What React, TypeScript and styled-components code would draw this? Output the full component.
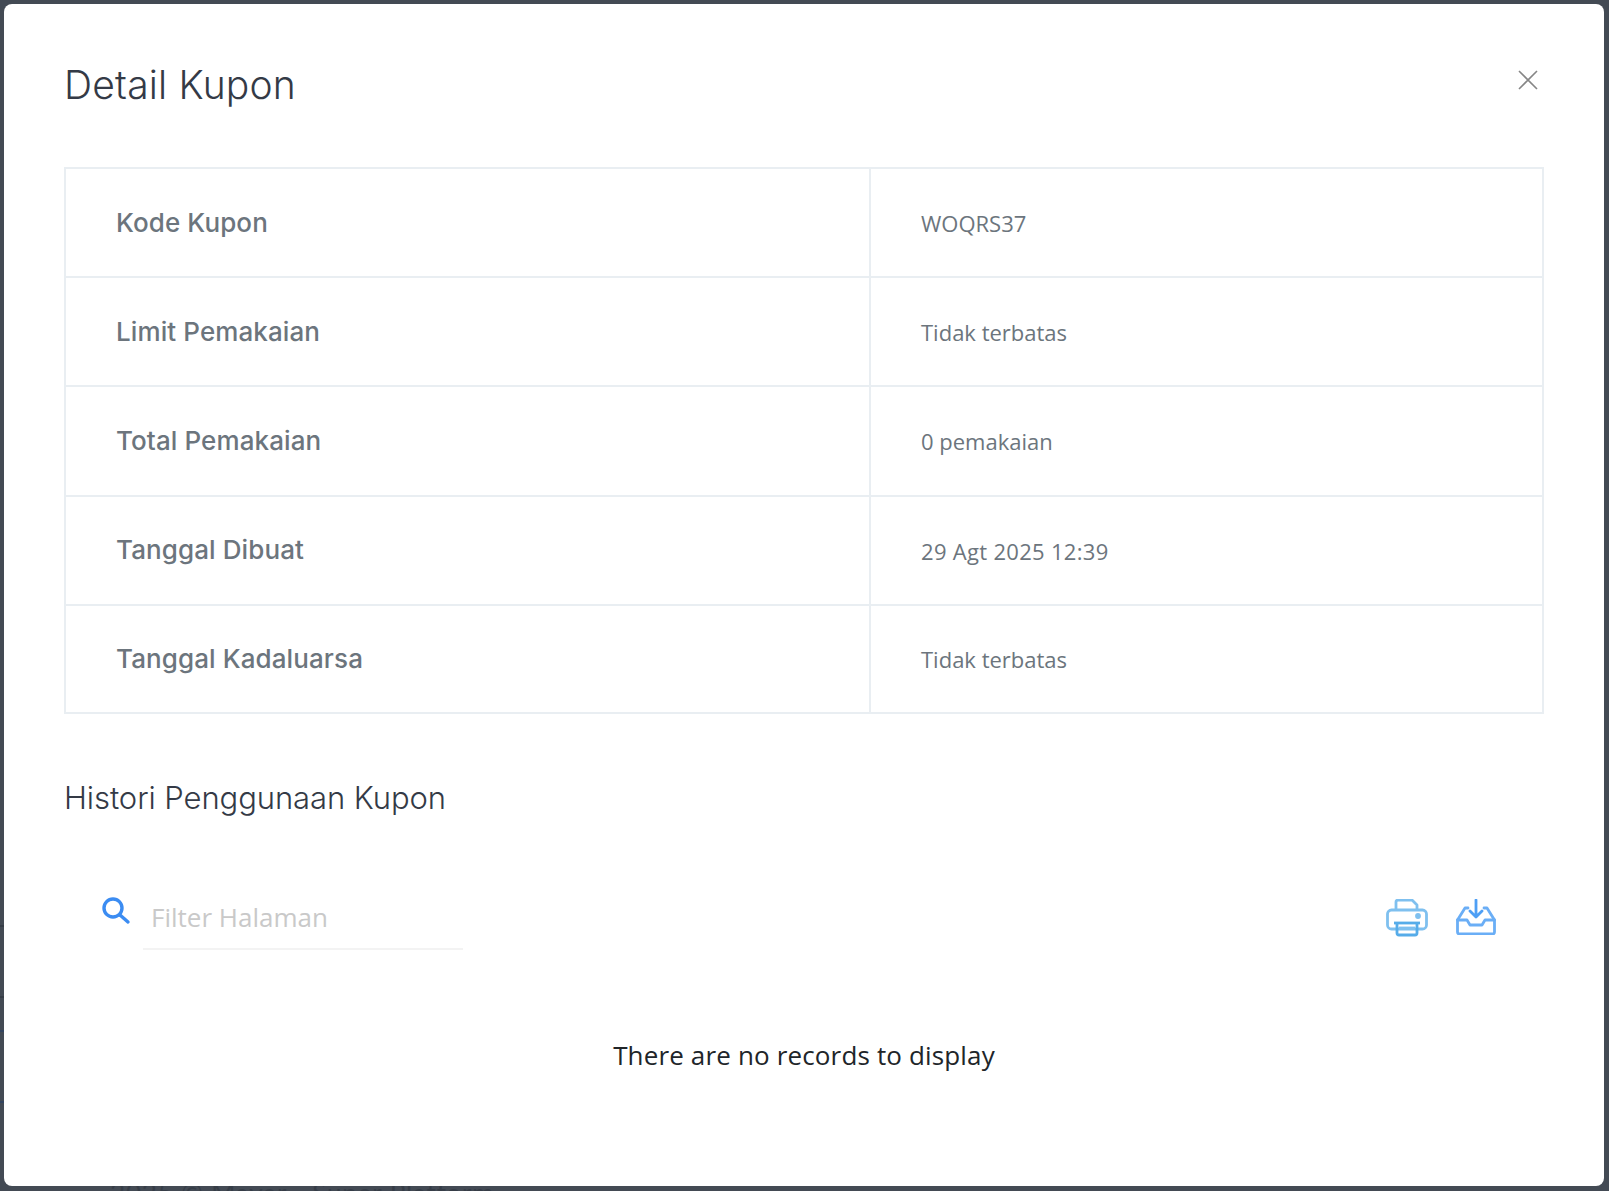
import React from "react";
import styled, { createGlobalStyle } from "styled-components";

const Global = createGlobalStyle`
  html, body { margin: 0; padding: 0; background: #434a54; }
  * { box-sizing: border-box; }
`;

const Backdrop = styled.div`
  position: relative;
  height: 1191px;
  width: 100%;
  padding: 4px 5px 5px 4px;
  background: #434a54;
  overflow: hidden;
`;

const PeekText = styled.div`
  position: absolute;
  left: 110px;
  top: 1178px;
  font: 400 26px/30px "Lato", sans-serif;
  letter-spacing: 0.85px;
  white-space: nowrap;
  color: #363d47;
`;

const EdgeTick = styled.div<{ $top: number; $color: string }>`
  position: absolute;
  left: 0;
  top: ${(p) => p.$top}px;
  width: 4px;
  height: 2px;
  background: ${(p) => p.$color};
`;

const Modal = styled.div`
  position: relative;
  z-index: 1;
  height: 1182px;
  background: #fff;
  border-radius: 8px;
  padding: 60px 60px 0;
`;

const Header = styled.div`
  display: flex;
  justify-content: space-between;
  align-items: flex-start;
  height: 103px;
`;

const Title = styled.h2`
  margin: -4px 0 0;
  font: 300 39px/50px "Inter", sans-serif;
  letter-spacing: 0.2px;
  color: #343a46;
`;

const CloseButton = styled.button`
  border: 0;
  background: none;
  padding: 0;
  margin: 6px 6px 0 0;
  width: 20px;
  height: 20px;
  display: flex;
`;

const Table = styled.div`
  border: 2px solid #e9eef2;
`;

const Row = styled.div`
  display: grid;
  grid-template-columns: 805px 1fr;
  height: 109.2px;
  border-bottom: 2px solid #e9eef2;
  &:last-child { border-bottom: 0; height: 106.2px; }
`;

const Label = styled.div`
  display: flex;
  align-items: center;
  padding: 0 0 0 50px;
  border-right: 2px solid #e9eef2;
  font: 500 26px/32px "Inter", sans-serif;
  letter-spacing: 0.1px;
  color: #6c757d;
`;

const Value = styled.div<{ $spacing?: number }>`
  display: flex;
  align-items: center;
  padding: 1px 0 0 50px;
  font: 400 22px/30px "Open Sans", sans-serif;
  letter-spacing: ${(p) => p.$spacing ?? 0}px;
  color: #6c757d;
`;

const Subtitle = styled.h3`
  margin: 63px 0 0;
  font: 300 31px/42px "Inter", sans-serif;
  letter-spacing: -0.08px;
  color: #343a46;
`;

const Toolbar = styled.div`
  display: flex;
  align-items: flex-start;
  margin-top: 71px;
  padding-left: 37px;
`;

const SearchIcon = styled.div`
  width: 30px;
  height: 30px;
  margin-top: 6px;
`;

const SearchField = styled.div`
  width: 320px;
  height: 60px;
  margin-left: 12px;
  padding: 7px 0 0 8px;
  border-bottom: 2px solid #f3f3f3;
  font: 400 26px/40px "Open Sans", sans-serif;
  color: #c9c9c9;
`;

const ToolIcons = styled.div`
  margin-left: auto;
  margin-right: 48px;
  margin-top: 9px;
  display: flex;
  gap: 28px;
`;

const Empty = styled.div`
  margin-top: 87px;
  text-align: center;
  font: 400 26px/36px "Open Sans", sans-serif;
  letter-spacing: 0.15px;
  color: #212529;
`;

const rows: [string, string, number?][] = [
  ["Kode Kupon", "WOQRS37"],
  ["Limit Pemakaian", "Tidak terbatas"],
  ["Total Pemakaian", "0 pemakaian"],
  ["Tanggal Dibuat", "29 Agt 2025 12:39", 0.3],
  ["Tanggal Kadaluarsa", "Tidak terbatas"],
];

export default function App() {
  return (
    <>
      <Global />
      <Backdrop>
        <EdgeTick $top={925} $color="#363d47" />
        <EdgeTick $top={996} $color="#363d47" />
        <EdgeTick $top={1030} $color="#33445f" />
        <EdgeTick $top={1101} $color="#33445f" />
        <PeekText>2025 © Mayar - Super Platform</PeekText>
        <Modal>
          <Header>
            <Title>Detail Kupon</Title>
            <CloseButton aria-label="Tutup">
              <svg width="20" height="20" viewBox="0 0 20 20" fill="none" stroke="#868686" strokeWidth="1.6">
                <path d="M1 1 L19 19 M19 1 L1 19" />
              </svg>
            </CloseButton>
          </Header>
          <Table>
            {rows.map(([k, v, s], i) => (
              <Row key={i}>
                <Label>{k}</Label>
                <Value $spacing={s}>{v}</Value>
              </Row>
            ))}
          </Table>
          <Subtitle>Histori Penggunaan Kupon</Subtitle>
          <Toolbar>
            <SearchIcon>
              <svg width="30" height="30" viewBox="0 0 30 30" fill="none" stroke="#3b8cf2" strokeWidth="3.4" strokeLinecap="round">
                <circle cx="12" cy="12" r="9" />
                <path d="M19 19 L27 26" />
              </svg>
            </SearchIcon>
            <SearchField>Filter Halaman</SearchField>
            <ToolIcons>
              <svg width="42" height="38" viewBox="0 0 42 38" fill="none" stroke="#7fc0ef" strokeWidth="2.8" strokeLinejoin="round">
                <path d="M10 11 V3 a2 2 0 0 1 2 -2 H26 l5 5 V11" />
                <rect x="1.5" y="11" width="39" height="19" rx="4" />
                <path d="M8 24 H34" stroke="#56ace9" />
                <path d="M11 24 V34 a2 2 0 0 0 2 2 H29 a2 2 0 0 0 2 -2 V24" stroke="#56ace9" />
                <path d="M13 29 H29" />
                <circle cx="32" cy="17" r="1.5" fill="#7fc0ef" />
              </svg>
              <svg width="40" height="36" viewBox="0 0 40 36" fill="none" stroke="#6aaef6" strokeWidth="2.8" strokeLinejoin="round" strokeLinecap="round">
                <path d="M20 1 V18 M14 12 L20 18 L26 12" stroke="#4e9ff5" />
                <path d="M12 9 H9 L1.5 21 V33 a2 2 0 0 0 2 2 H36.5 a2 2 0 0 0 2 -2 V21 L31 9 H28" />
                <path d="M1.5 21 H11 L14 26 H26 L29 21 H38.5" />
              </svg>
            </ToolIcons>
          </Toolbar>
          <Empty>There are no records to display</Empty>
        </Modal>
      </Backdrop>
    </>
  );
}
